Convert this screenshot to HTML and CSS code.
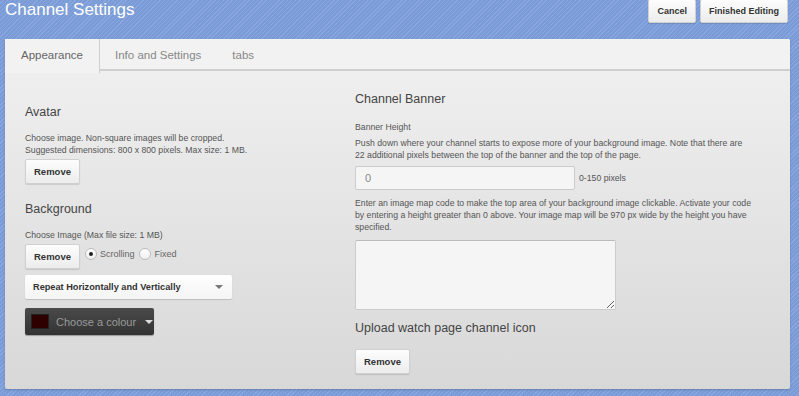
FILE: index.html
```html
<!DOCTYPE html>
<html lang="en">
  <head>
    <meta charset="UTF-8" />
    <title>Channel Settings</title>
    <link rel="stylesheet" href="styles.css">
  </head>
  <body>
    <header class="topbar">
      <h1>Channel Settings</h1>
      <div class="actions">
        <button type="button" class="btn">Cancel</button>
        <button type="button" class="btn">Finished Editing</button>
      </div>
    </header>

    <main class="panel">
      <nav class="tabs">
        <a class="tab active">Appearance</a>
        <a class="tab">Info and Settings</a>
        <a class="tab">tabs</a>
      </nav>

      <div class="content">
        <section class="col col-left">
          <h2>Avatar</h2>
          <p class="note">Choose image. Non-square images will be cropped.<br>Suggested dimensions: 800 x 800 pixels. Max size: 1 MB.</p>
          <button type="button" class="btn">Remove</button>

          <h2 class="bg-title">Background</h2>
          <p class="note">Choose Image (Max file size: 1 MB)</p>
          <div class="row">
            <button type="button" class="btn">Remove</button>
            <label class="radio"><span class="dot checked"></span>Scrolling</label>
            <label class="radio"><span class="dot"></span>Fixed</label>
          </div>
          <div class="select">
            <span>Repeat Horizontally and Vertically</span>
            <span class="caret"></span>
          </div>
          <div class="colour">
            <span class="swatch"></span>
            <span>Choose a colour</span>
            <span class="caret light"></span>
          </div>
        </section>

        <section class="col col-right">
          <h2>Channel Banner</h2>
          <p class="label">Banner Height</p>
          <p class="note">Push down where your channel starts to expose more of your background image. Note that there are 22 additional pixels between the top of the banner and the top of the page.</p>
          <div class="row">
            <input type="text" class="field" value="0">
            <span class="note">0-150 pixels</span>
          </div>
          <p class="note">Enter an image map code to make the top area of your background image clickable. Activate your code by entering a height greater than 0 above. Your image map will be 970 px wide by the height you have specified.</p>
          <textarea class="area"></textarea>
          <h2 class="upload-title">Upload watch page channel icon</h2>
          <button type="button" class="btn">Remove</button>
        </section>
      </div>
    </main>
  </body>
</html>
```

FILE: styles.css
```css
* {
  box-sizing: border-box;
}

body {
  margin: 0;
  height: 396px;
  overflow: hidden;
  font-family: "Liberation Sans", Arial, sans-serif;
  color: #555;
  background-color: #7b9cd6;
  background-image: repeating-linear-gradient(
    -45deg,
    #7a9bd6 0,
    #7a9bd6 2px,
    #87a7de 2px,
    #87a7de 3px
  );
}

.topbar {
  display: flex;
  justify-content: space-between;
  height: 39px;
  padding: 0 11px 0 5px;
}

h1 {
  margin: 0;
  font-size: 17px;
  font-weight: normal;
  color: #fff;
  line-height: 20px;
}

.actions {
  display: flex;
  gap: 4px;
  align-items: flex-start;
}

.btn {
  font-family: "Liberation Sans", Arial, sans-serif;
  font-size: 9.5px;
  font-weight: bold;
  color: #333;
  height: 25px;
  padding: 0 8px;
  border: 1px solid #d0d0d0;
  border-radius: 2px;
  background: linear-gradient(#fdfdfd, #ececec);
  box-shadow: 0 1px 1px rgba(0, 0, 0, 0.12);
}

.actions .btn {
  height: 24px;
  margin-top: -1px;
  padding: 0 8px;
  font-size: 9px;
}

.panel {
  margin: 0 9px 0 5px;
  height: 350px;
  border-radius: 2px;
  background: linear-gradient(#f1f1f1, #d8d8d8);
  box-shadow: 0 1px 2px rgba(0, 0, 0, 0.2);
}

.tabs {
  display: flex;
  height: 32px;
  background: #f2f2f2;
  border-bottom: 2px solid #cfcfcf;
  border-radius: 2px 2px 0 0;
}

.tab {
  font-size: 11.5px;
  color: #888;
  line-height: 32px;
  padding: 0 16px 0 15px;
}

.tab.active {
  color: #666;
  padding: 0 16px;
  border-right: 1px solid #cfcfcf;
  height: 34px;
  background: #f2f2f2;
}

.content {
  display: flex;
  padding: 0 20px;
}

.col-left {
  width: 330px;
  padding-top: 32px;
}

.col-right {
  width: 397px;
  padding-top: 19px;
}

h2 {
  margin: 0;
  font-size: 12.5px;
  font-weight: normal;
  color: #444;
  line-height: 18px;
}

.note,
.label {
  margin: 0;
  font-size: 8.7px;
  line-height: 12px;
  color: #555;
}

.col-left .note {
  margin: 11px 0 3px;
}

.bg-title {
  margin-top: 16px;
}

.col-left .row .btn {
  flex: none;
}

.row {
  display: flex;
  align-items: flex-start;
}

.radio {
  display: flex;
  align-items: center;
  gap: 3px;
  font-size: 9px;
  color: #666;
  margin-left: 5px;
  margin-top: 4px;
}

.radio + .radio {
  margin-left: 5px;
}

.dot {
  width: 12px;
  height: 12px;
  border-radius: 50%;
  border: 1px solid #bbb;
  background: linear-gradient(#fff, #f0f0f0);
  display: flex;
  align-items: center;
  justify-content: center;
}

.dot.checked::after {
  content: "";
  width: 4px;
  height: 4px;
  border-radius: 50%;
  background: #222;
}

.select {
  display: flex;
  align-items: center;
  justify-content: space-between;
  width: 207px;
  height: 24px;
  margin-top: 6px;
  padding: 0 9px 0 8px;
  font-size: 9.2px;
  font-weight: bold;
  color: #333;
  background: linear-gradient(#ffffff, #f4f4f4);
  border-radius: 2px;
  box-shadow: 0 1px 1px rgba(0, 0, 0, 0.15);
}

.caret {
  width: 0;
  height: 0;
  border-left: 4px solid transparent;
  border-right: 4px solid transparent;
  border-top: 4px solid #777;
}

.caret.light {
  border-top-color: #ddd;
  margin-left: 2px;
}

.colour {
  display: flex;
  align-items: center;
  width: 129px;
  height: 27px;
  margin-top: 9px;
  padding: 0 6px;
  gap: 7px;
  font-size: 11px;
  white-space: nowrap;
  color: #9a9a9a;
  background: linear-gradient(#4a4a4a, #333);
  border-radius: 2px;
  box-shadow: 0 1px 1px rgba(0, 0, 0, 0.3);
}

.swatch {
  flex: none;
  width: 18px;
  height: 15px;
  background: #2e0000;
  border: 1px solid #222;
}

.col-right .label {
  margin-top: 13px;
}

.col-right .note {
  margin-top: 4px;
}

.col-right .row {
  margin: 5px 0 7px;
  align-items: center;
}

.field {
  width: 220px;
  height: 24px;
  padding: 0 9px;
  font-family: "Liberation Sans", Arial, sans-serif;
  font-size: 11px;
  color: #888;
  background: #f5f5f5;
  border: 1px solid #ccc;
  border-radius: 2px;
  margin-right: 4px;
}

.col-right .row .note {
  margin: 0;
}

.area {
  display: block;
  width: 261px;
  height: 70px;
  margin-top: 7px;
  background: #f5f5f5;
  border: 1px solid #ccc;
  border-top-color: #bbb;
  border-radius: 2px;
}

.upload-title {
  margin: 9px 0 12px;
}
```
